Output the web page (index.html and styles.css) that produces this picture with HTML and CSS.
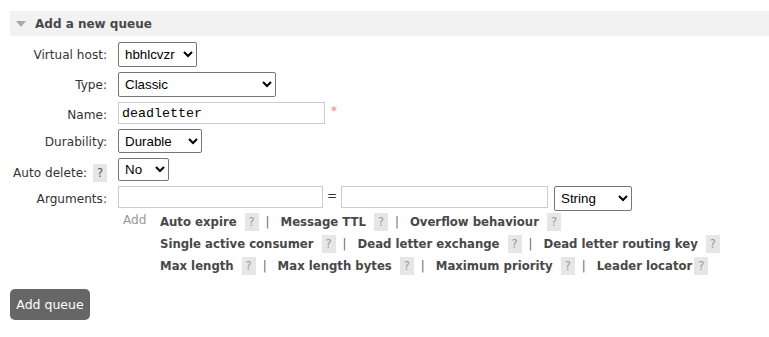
FILE: index.html
```html
<!DOCTYPE html>
<html>
<head>
<meta charset="utf-8">
<link rel="stylesheet" href="styles.css">
</head>
<body>
<div class="section">
  <div class="section-head"><span class="tri"></span><span class="title">Add a new queue</span></div>
  <table class="form">
    <tr>
      <th>Virtual host:</th>
      <td><select class="sel sel-vhost"><option>hbhlcvzr</option></select></td>
    </tr>
    <tr>
      <th>Type:</th>
      <td><select class="sel sel-type"><option>Classic</option></select></td>
    </tr>
    <tr>
      <th>Name:</th>
      <td><input class="txt txt-name" type="text" value="deadletter"><span class="req">*</span></td>
    </tr>
    <tr>
      <th>Durability:</th>
      <td><select class="sel sel-dur"><option>Durable</option></select></td>
    </tr>
    <tr>
      <th>Auto delete: <span class="help">?</span></th>
      <td><select class="sel sel-ad"><option>No</option></select></td>
    </tr>
    <tr class="last">
      <th>Arguments:</th>
      <td>
        <div class="args">
          <input class="txt txt-arg" type="text"><span class="eq">=</span><input class="txt txt-arg2" type="text"><select class="sel sel-str"><option>String</option></select>
        </div>
        <div class="adds">
          <span class="add">Add</span>
          <div class="links">
            <div class="line"><b>Auto expire</b><span class="help">?</span><span class="bar">|</span><b>Message TTL</b><span class="help">?</span><span class="bar">|</span><b>Overflow behaviour</b><span class="help">?</span></div>
            <div class="line"><b>Single active consumer</b><span class="help">?</span><span class="bar">|</span><b>Dead letter exchange</b><span class="help">?</span><span class="bar">|</span><b>Dead letter routing key</b><span class="help">?</span></div>
            <div class="line"><b>Max length</b><span class="help">?</span><span class="bar">|</span><b>Max length bytes</b><span class="help">?</span><span class="bar">|</span><b>Maximum priority</b><span class="help">?</span><span class="bar">|</span><b>Leader locator</b><span class="help tight">?</span></div>
          </div>
        </div>
      </td>
    </tr>
  </table>
  <button class="btn">Add queue</button>
</div>
</body>
</html>
```
FILE: styles.css
```css
html, body { margin: 0; padding: 0; background: #fff; }
body { font-family: "DejaVu Sans", Verdana, sans-serif; font-size: 12.1px; color: #484848; }
.section { padding: 11px 0 0 10px; }
.section-head { height: 25px; background: #f2f2f2; display: flex; align-items: center; }
.tri { width: 0; height: 0; border-left: 5px solid transparent; border-right: 5px solid transparent; border-top: 6px solid #aaa; margin-left: 6px; margin-right: 9px; margin-top: 1px; }
.title { font-weight: bold; font-size: 12px; color: #484848; }
.form { border-collapse: collapse; margin-top: 6px; }
.form th { text-align: right; font-weight: normal; padding: 6px 11px 0 0; width: 97px; vertical-align: top; white-space: nowrap; color: #333; }
.form td { padding: 0 0 5px 0; vertical-align: top; }
.form tr.last td { padding-bottom: 0; }
.sel { font-family: "Liberation Sans", Arial, sans-serif; font-size: 13.33px; color: #000; height: 25px; border: 1px solid #767676; border-radius: 2px; background: #fff; padding: 0 2px; display: block; }
.sel-vhost { width: 79px; }
.sel-type { width: 158px; }
.sel-dur { width: 84px; height: 24px; }
.sel-ad { width: 51px; height: 23px; }
.sel-str { width: 78px; height: 25px; margin-left: 6px; }
.txt { font-family: "Liberation Mono", "Courier New", monospace; font-size: 13.33px; height: 22px; box-sizing: border-box; border: 1px solid #ccc; padding: 1px 3px; color: #000; vertical-align: top; }
.txt-name { width: 207px; }
.req { color: #f08080; margin-left: 6px; vertical-align: top; font-size: 12px; position: relative; top: 2px; }
.args { display: flex; align-items: flex-start; }
.txt-arg { width: 205px; }
.txt-arg2 { width: 207px; }
.eq { width: 18px; text-align: center; line-height: 20px; color: #333; }
.adds { display: flex; margin-top: 0; }
.add { color: #999; width: 42px; padding-left: 5px; box-sizing: border-box; line-height: 18px; }
.links { font-size: 11.7px; }
.links b { font-weight: bold; color: #484848; }
.line { height: 22px; display: flex; align-items: center; white-space: nowrap; }
.help { display: inline-block; background: #e6e6e6; color: #999; width: 14px; height: 18px; line-height: 18px; text-align: center; margin: 0 7px 0 8px; font-size: 11.5px; font-weight: normal; }
.form th .help { margin: 0 0 0 2px; color: #555; }
.help.tight { margin-left: 2px; }
.bar { color: #666; margin-right: 11px; }
.btn { margin-top: 12px; display: block; background: #666; color: #fff; border: none; border-radius: 5px; font-family: "DejaVu Sans", Verdana, sans-serif; font-size: 12.5px; height: 31px; width: 80px; padding: 0; }
```
